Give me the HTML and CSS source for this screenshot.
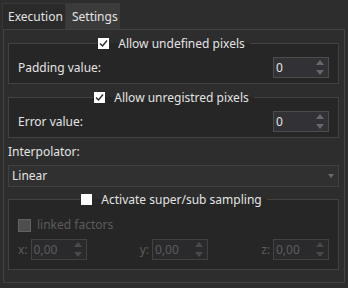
FILE: index.html
```html
<!DOCTYPE html>
<html lang="en">
<head>
  <meta charset="UTF-8" />
  <meta name="viewport" content="width=device-width, initial-scale=1" />
  <title>Settings</title>
  <link rel="stylesheet" href="styles.css">
</head>
<body>
<div class="tabs">
  <div class="tab">Execution</div>
  <div class="tab active">Settings</div>
</div>

<div class="pane">
  <fieldset class="group">
    <legend>
      <span class="check checked"><svg viewBox="0 0 11 11"><polyline points="2,5.5 4.5,8 9,2.5" /></svg></span>
      Allow undefined pixels
    </legend>
    <div class="row">
      <span>Padding value:</span>
      <div class="spin"><span>0</span><span class="arrows"><i class="up"></i><i class="down"></i></span></div>
    </div>
  </fieldset>

  <fieldset class="group">
    <legend>
      <span class="check checked"><svg viewBox="0 0 11 11"><polyline points="2,5.5 4.5,8 9,2.5" /></svg></span>
      Allow unregistred pixels
    </legend>
    <div class="row">
      <span>Error value:</span>
      <div class="spin"><span>0</span><span class="arrows"><i class="up"></i><i class="down"></i></span></div>
    </div>
  </fieldset>

  <div class="field-label">Interpolator:</div>
  <div class="combo"><span>Linear</span><i class="drop"></i></div>

  <fieldset class="group sampling">
    <legend>
      <span class="check"></span>
      Activate super/sub sampling
    </legend>
    <div class="linked"><span class="check disabled"></span>linked factors</div>
    <div class="factors">
      <div class="factor">
        <span>x:</span>
        <div class="spin off"><span>0,00</span><span class="arrows"><i class="up"></i><i class="down"></i></span></div>
      </div>
      <div class="factor">
        <span>y:</span>
        <div class="spin off"><span>0,00</span><span class="arrows"><i class="up"></i><i class="down"></i></span></div>
      </div>
      <div class="factor">
        <span>z:</span>
        <div class="spin off"><span>0,00</span><span class="arrows"><i class="up"></i><i class="down"></i></span></div>
      </div>
    </div>
  </fieldset>
</div>
</body>
</html>
```

FILE: styles.css
```css
:root {
  --bg: #2d2d2d;
  --group-bg: #262626;
  --line: #424242;
  --text: #e4e4e4;
  --dim: #5c5c5c;
}

body {
  margin: 0;
  background: var(--bg);
  color: var(--text);
  font-family: "Noto Sans", "Open Sans", sans-serif;
  font-size: 12px;
  line-height: 16px;
}

.tabs {
  display: flex;
  padding: 3px 0 0 2px;
}

.tab {
  height: 26px;
  box-sizing: border-box;
  display: flex;
  align-items: center;
  padding: 0 5px;
  width: 64px;
  background: #2a2a2a;
  border: 1px solid #383838;
  border-bottom: none;
}

.tab.active {
  width: 54px;
  background: #3b3b3b;
  border-color: #3b3b3b;
}

.pane {
  margin-left: 3px;
  width: 342px;
  height: 254px;
  box-sizing: border-box;
  border: 1px solid var(--line);
  padding: 0 5px 0 4px;
}

.group {
  margin: 6px 0 0;
  padding: 6px 9px 5px;
  border: 1px solid var(--line);
  background: var(--group-bg);
  min-width: 0;
}

.group legend {
  margin: 0 auto;
  padding: 0 5px 0 1px;
  line-height: 15px;
  display: flex;
  align-items: center;
  gap: 9px;
}

.check {
  width: 11px;
  height: 11px;
  background: #fff;
  display: inline-block;
  box-sizing: border-box;
}

.check svg {
  display: block;
  width: 11px;
  height: 11px;
  fill: none;
  stroke: #2a2a2a;
  stroke-width: 1.4;
}

.check.disabled {
  width: 13px;
  height: 13px;
  background: #4e4e4e;
  border: 1px solid #626262;
}

.row {
  display: flex;
  justify-content: space-between;
  align-items: center;
}

.spin {
  width: 56px;
  height: 21px;
  box-sizing: border-box;
  border: 1px solid #4c4c4c;
  background: #323236;
  display: flex;
  align-items: center;
  justify-content: space-between;
  padding: 0 4px 0 2px;
}

.arrows {
  display: flex;
  flex-direction: column;
  gap: 5px;
}

.arrows i {
  width: 0;
  height: 0;
  border-left: 4px solid transparent;
  border-right: 4px solid transparent;
}

.arrows .up {
  border-bottom: 5px solid #676767;
}

.arrows .down {
  border-top: 5px solid #676767;
}

.spin.off {
  color: var(--dim);
  border-color: #424242;
  background: #2a2a2c;
}

.spin.off .up {
  border-bottom-color: #4a4a4a;
}

.spin.off .down {
  border-top-color: #4a4a4a;
}

.field-label {
  margin-top: 6px;
}

.combo {
  margin-top: 5px;
  height: 22px;
  box-sizing: border-box;
  border: 1px solid #404040;
  background: #303030;
  display: flex;
  align-items: center;
  justify-content: space-between;
  padding: 0 4px 0 3px;
}

.drop {
  width: 0;
  height: 0;
  border-left: 3px solid transparent;
  border-right: 3px solid transparent;
  border-top: 4px solid #6a6a6a;
}

.sampling {
  margin-top: 5px;
  padding-top: 10px;
  padding-bottom: 9px;
}

.linked {
  display: flex;
  align-items: center;
  gap: 6px;
  color: var(--dim);
}

.factors {
  margin-top: 6px;
  display: flex;
  justify-content: space-between;
  color: var(--dim);
}

.factor {
  display: flex;
  align-items: center;
  gap: 3px;
}
```
